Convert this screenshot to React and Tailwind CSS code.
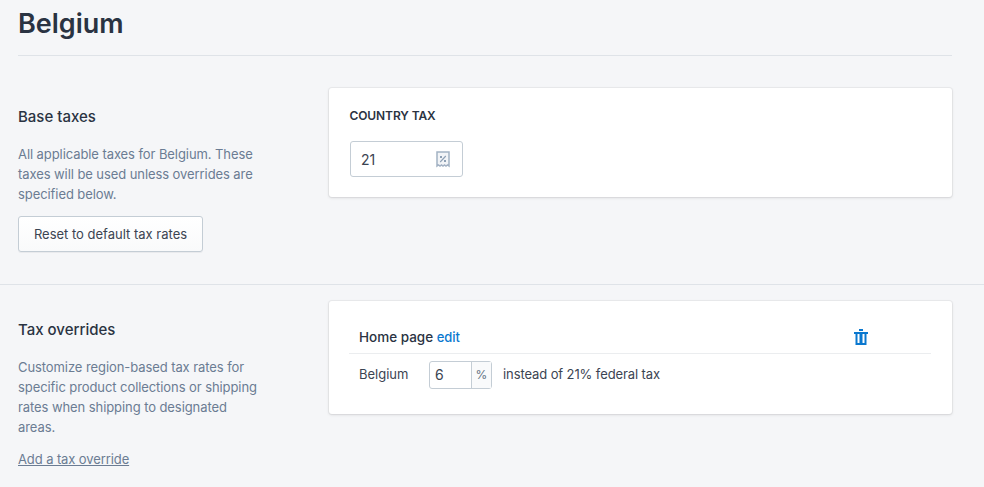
import React from 'react';

function ReceiptIcon() {
  return (
    <svg width="14" height="17" viewBox="0 0 14 17" fill="none">
      <path d="M1 1h12v14l-1.5-1-1.5 1-1.5-1-1.5 1-1.5-1-1.5 1-1.5-1L1 15z" fill="#f2f4f7" stroke="#a3b2c4" strokeWidth="1.5" />
      <path d="M4.2 11l5.6-6" stroke="#8ea0b4" strokeWidth="1.1" />
      <rect x="4" y="5" width="2" height="2" fill="#8ea0b4" />
      <rect x="8" y="9" width="2" height="2" fill="#8ea0b4" />
    </svg>
  );
}

function TrashIcon() {
  return (
    <svg width="14" height="16" viewBox="0 0 14 16" fill="#0a78cf">
      <rect x="5" y="0" width="4" height="2" />
      <rect x="0" y="3" width="14" height="2" />
      <path d="M1.5 5h11v11h-11zM3.5 5v9h2V5zM8.5 5v9h2V5z" fillRule="evenodd" />
    </svg>
  );
}

export default function App() {
  return (
    <div className="h-[487px] w-[984px] overflow-hidden bg-[#f5f6f8] text-[#212b36] font-['Inter',sans-serif]">
      {/* Header */}
      <div className="ml-[18px] mr-[32px] h-[56px] border-b border-[#dfe3e8] pt-[6px]">
        <h1 className="text-[27px] leading-[36px] font-semibold text-[#2a3342]">Belgium</h1>
      </div>

      {/* Base taxes */}
      <div className="flex h-[229px] border-b border-[#dfe3e8] pl-[18px] pr-[32px] pt-[32px]">
        <div className="w-[311px] shrink-0">
          <h2 className="pt-[19px] text-[15px] leading-[20px] font-medium text-[#2a3342]">Base taxes</h2>
          <p className="mt-[17px] w-[245px] text-[13px] leading-[20px] tracking-[-0.08px] text-[#6b7c93]">
            All applicable taxes for Belgium. These taxes will be used unless overrides are specified below.
          </p>
          <button className="mt-[12px] h-[36px] w-[185px] rounded-[3px] border border-[#c4cdd5] bg-gradient-to-b from-white to-[#f9fafb] pt-[2px] text-[13px] text-[#3b4452] shadow-[0_1px_0_rgba(22,29,37,0.05)]">
            Reset to default tax rates
          </button>
        </div>
        <div className="h-[109px] flex-1 rounded-[3px] bg-white pl-[21px] pr-[21px] pt-[20px] shadow-[0_0_0_1px_rgba(63,63,68,0.05),0_1px_3px_0_rgba(63,63,68,0.15)]">
          <div className="-ml-[0.5px] text-[12px] leading-[16px] font-semibold tracking-[-0.1px] text-[#2a3342]">COUNTRY TAX</div>
          <div className="mt-[17px] flex h-[36px] w-[113px] items-center justify-between rounded-[3px] border border-[#c4cdd5] pl-[10px] pr-[12px] text-[14px] text-[#3b4452]">
            <span>21</span>
            <ReceiptIcon />
          </div>
        </div>
      </div>

      {/* Tax overrides */}
      <div className="flex pl-[18px] pr-[32px] pt-[16px]">
        <div className="w-[311px] shrink-0">
          <h2 className="pt-[19px] text-[15px] leading-[20px] font-medium text-[#2a3342]">Tax overrides</h2>
          <p className="mt-[17px] w-[245px] text-[13px] leading-[20px] tracking-[-0.08px] text-[#6b7c93]">
            Customize region-based tax rates for specific product collections or shipping rates when shipping to designated areas.
          </p>
          <a className="mt-[12px] block text-[13px] leading-[20px] tracking-[-0.1px] text-[#6b7c93] underline">Add a tax override</a>
        </div>
        <div className="h-[113px] flex-1 rounded-[3px] bg-white pl-[20px] pr-[21px] pt-[20px] shadow-[0_0_0_1px_rgba(63,63,68,0.05),0_1px_3px_0_rgba(63,63,68,0.15)]">
          <div className="flex h-[33px] items-center justify-between border-b border-[#ebedef] pl-[10px] pr-[63px] text-[13px] font-medium text-[#2a3342]">
            <span><span className="text-[13.5px]">Home page</span> <span className="text-[#0a78cf]">edit</span></span>
            <TrashIcon />
          </div>
          <div className="mt-[7px] flex items-center pl-[10px] text-[13px] text-[#3b4452]">
            <span className="w-[70px]">Belgium</span>
            <div className="flex h-[28px] w-[63px] rounded-[3px] border border-[#c4cdd5]">
              <span className="flex-1 pl-[5px] leading-[26px] text-[14px] text-[#3b4452]">6</span>
              <span className="flex w-[20px] items-center justify-center border-l border-[#c4cdd5] bg-[#f9fafb] text-[12px] text-[#637381]">%</span>
            </div>
            <span className="ml-[11px] tracking-[-0.1px]">instead of 21% federal tax</span>
          </div>
        </div>
      </div>
    </div>
  );
}
